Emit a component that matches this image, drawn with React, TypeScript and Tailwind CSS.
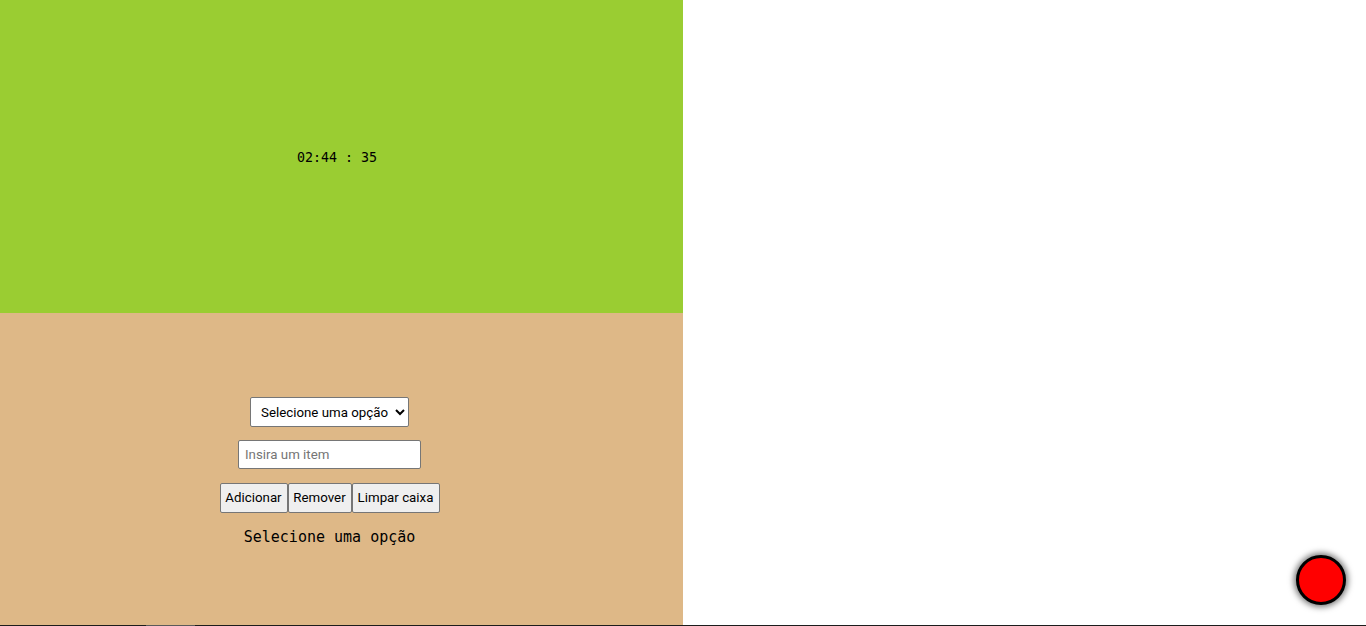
import { useState } from "react";

const mono = { fontFamily: '"DejaVu Sans Mono", "Liberation Mono", monospace' };

export default function App() {
  const [items, setItems] = useState<string[]>([]);
  const [text, setText] = useState("");
  const [sel, setSel] = useState("");

  return (
    <div className="flex h-[626px] w-[1366px] flex-col overflow-hidden bg-white font-['Roboto','Liberation_Sans',Arial,sans-serif]">
      <div className="flex h-[625px] w-full">
        <div className="flex w-[683px] flex-col">
          <section className="flex h-[313px] items-center justify-center bg-[#9acd32] pr-[9px] pt-[2px]">
            <span className="text-[13.3px] leading-none text-black" style={mono}>
              02:44 : 35
            </span>
          </section>

          <section className="flex h-[312px] flex-col items-center justify-center gap-[13px] bg-[#deb887] pr-[24px] pt-[6px]">
            <select
              value={sel}
              onChange={(e) => setSel(e.target.value)}
              className="h-[30px] w-[159px] rounded-[2px] border border-[#767676] bg-white pl-[6px] text-[13.3px] text-black"
            >
              <option value="">Selecione uma opção</option>
              {items.map((it) => (
                <option key={it} value={it}>
                  {it}
                </option>
              ))}
            </select>

            <input
              type="text"
              value={text}
              onChange={(e) => setText(e.target.value)}
              placeholder="Insira um item"
              className="h-[29px] w-[183px] rounded-[2px] border border-[#767676] bg-white px-[6px] text-[13.3px] text-black placeholder:text-[#757575] focus:outline-none"
            />

            <div className="mt-[1px] flex">
              <Btn
                label="Adicionar"
                w="w-[68px]"
                onClick={() => {
                  if (text.trim()) setItems((l) => [...l, text.trim()]);
                  setText("");
                }}
              />
              <Btn
                label="Remover"
                w="w-[64px]"
                onClick={() => setItems((l) => l.filter((i) => i !== sel))}
              />
              <Btn label="Limpar caixa" w="w-[88px]" onClick={() => setItems([])} />
            </div>

            <p className="mt-[1px] text-[15px] leading-[20px] text-black" style={mono}>
              {sel || "Selecione uma opção"}
            </p>
          </section>
        </div>
        <div className="flex-1" />
      </div>

      {/* strip along the bottom edge */}
      <div className="flex h-px w-full bg-[#1c1c1c]">
        <div className="ml-[146px] w-[49px] bg-[#5a5a5a]" />
      </div>

      <button
        type="button"
        aria-label="Gravar"
        className="fixed bottom-[21px] right-[20px] h-[50px] w-[50px] rounded-full border-[3px] border-black bg-[#ff0000] shadow-[0_0_6px_2px_rgba(0,0,0,0.55)]"
      />
    </div>
  );
}

function Btn({ label, w, onClick }: { label: string; w: string; onClick: () => void }) {
  return (
    <button
      type="button"
      onClick={onClick}
      className={`${w} h-[30px] rounded-[2px] border border-[#767676] bg-[#efefef] text-[13.3px] text-black hover:bg-[#e5e5e5]`}
    >
      {label}
    </button>
  );
}
